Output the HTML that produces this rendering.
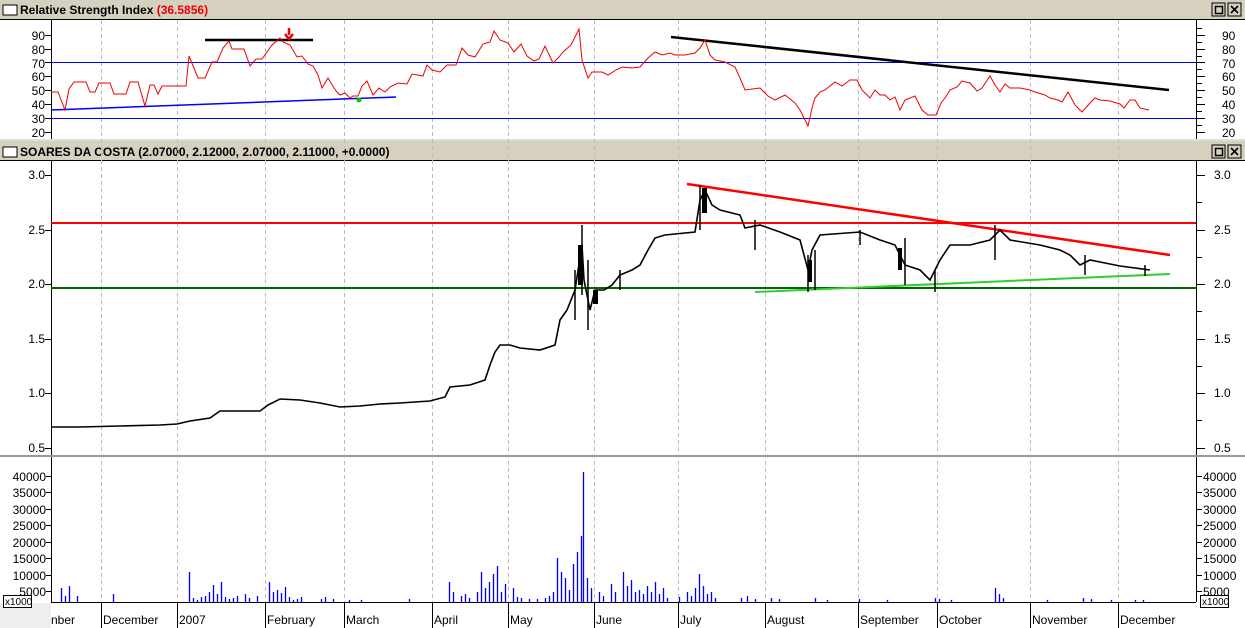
<!DOCTYPE html>
<html><head><meta charset="utf-8"><style>
html,body{margin:0;padding:0;background:#fff;width:1245px;height:628px;overflow:hidden;font-family:"Liberation Sans",sans-serif}
svg text{font-family:"Liberation Sans",sans-serif}
</style></head><body>
<svg width="1245" height="628" viewBox="0 0 1245 628" xmlns="http://www.w3.org/2000/svg">
<rect x="0" y="0" width="1245" height="19" fill="#d6d0c0"/>
<rect x="0" y="19" width="1245" height="1" fill="#000"/>
<rect x="3" y="5" width="14" height="10" fill="#fff" stroke="#000"/>
<text x="20" y="14" font-size="12" font-weight="bold" fill="#000">Relative Strength Index <tspan fill="#e00">(36.5856)</tspan></text>
<rect x="0" y="139" width="1245" height="2" fill="#ddd"/>
<rect x="0" y="141" width="1245" height="19" fill="#d6d0c0"/>
<rect x="0" y="160" width="1245" height="1" fill="#000"/>
<rect x="3" y="147" width="14" height="10" fill="#fff" stroke="#000"/>
<text x="20" y="156" font-size="12" font-weight="bold" fill="#000">SOARES DA COSTA (2.07000, 2.12000, 2.07000, 2.11000, +0.0000)</text>
<g fill="#d6d0c0" stroke="#000">
<rect x="1212" y="3" width="13" height="13"/><rect x="1228" y="3" width="13" height="13"/>
<rect x="1212" y="145" width="13" height="13"/><rect x="1228" y="145" width="13" height="13"/>
</g>
<rect x="1215.5" y="6.5" width="7" height="7" fill="none" stroke="#000" stroke-width="1.5"/>
<rect x="1215.5" y="148.5" width="7" height="7" fill="none" stroke="#000" stroke-width="1.5"/>
<path d="M1231 6l7 7M1238 6l-7 7M1231 148l7 7M1238 148l-7 7" stroke="#000" stroke-width="1.6"/>
<rect x="0" y="455" width="1245" height="2" fill="#999"/>
<g shape-rendering="crispEdges">
<path d="M51.5 20V139M51.5 161V455M51.5 457V602M1196.5 20V139M1196.5 161V455M1196.5 457V602M51 602.5H1196" stroke="#000" stroke-width="1"/>
</g>
<rect x="0" y="603" width="51" height="25" fill="#eee"/>
<g stroke="#bbb" stroke-dasharray="4,3" shape-rendering="crispEdges">
<path d="M101.5 20V602M177.5 20V602M265.5 20V602M344.5 20V602M432.5 20V602M508.5 20V602M594.5 20V602M678.5 20V602M765.5 20V602M858.5 20V602M937.5 20V602M1030.5 20V602M1118.5 20V602"/>
</g>
<g stroke="#000" shape-rendering="crispEdges"><path d="M101.5 602V628M177.5 602V628M265.5 602V628M344.5 602V628M432.5 602V628M508.5 602V628M594.5 602V628M678.5 602V628M765.5 602V628M858.5 602V628M937.5 602V628M1030.5 602V628M1118.5 602V628"/></g>
<g font-size="12" fill="#000">
<text x="51" y="624">nber</text><text x="103" y="624">December</text><text x="179" y="624">2007</text><text x="267" y="624">February</text><text x="346" y="624">March</text><text x="434" y="624">April</text><text x="510" y="624">May</text><text x="596" y="624">June</text><text x="680" y="624">July</text><text x="767" y="624">August</text><text x="860" y="624">September</text><text x="939" y="624">October</text><text x="1032" y="624">November</text><text x="1120" y="624">December</text>
</g>
<g font-size="12" fill="#000" text-anchor="end">
<text x="45" y="40">90</text><text x="45" y="54">80</text><text x="45" y="68">70</text><text x="45" y="81">60</text><text x="45" y="95">50</text><text x="45" y="109">40</text><text x="45" y="123">30</text><text x="45" y="137">20</text>
</g>
<g font-size="12" fill="#000">
<text x="1222" y="40">90</text><text x="1222" y="54">80</text><text x="1222" y="68">70</text><text x="1222" y="81">60</text><text x="1222" y="95">50</text><text x="1222" y="109">40</text><text x="1222" y="123">30</text><text x="1222" y="137">20</text>
</g>
<g stroke="#000" shape-rendering="crispEdges"><path d="M51 35.5h-6M51 49.5h-6M51 62.5h-6M51 76.5h-6M51 90.5h-6M51 104.5h-6M51 118.5h-6M51 132.5h-6M1196 35.5h9M1196 49.5h9M1196 62.5h9M1196 76.5h9M1196 90.5h9M1196 104.5h9M1196 118.5h9M1196 132.5h9M1196 28.5h6M1196 42.5h6M1196 56.5h6M1196 69.5h6M1196 83.5h6M1196 97.5h6M1196 111.5h6M1196 125.5h6"/></g>
<path d="M51 62.5H1196M51 118.5H1196" stroke="#00f" stroke-width="1" shape-rendering="crispEdges"/>
<path d="M51 110L396 97" stroke="#00f" stroke-width="1.5"/>
<path d="M205 40H313" stroke="#000" stroke-width="2.5"/>
<path d="M671 37L1169 90" stroke="#000" stroke-width="2.5"/>
<path d="M289 28v7M285 34l4 5 4-5" stroke="#e00" stroke-width="2.5" fill="none"/>
<circle cx="359" cy="100" r="2.5" fill="#0c0"/>
<polyline fill="none" stroke="#e00" stroke-width="1" points="51,92 58,92 65,110 69,89 74,82 86,82 90,92 95,92 99,83 110,83 114,94 126,94 130,82 138,82 145,106 150,85 154,85 158,94 162,86 186,86 189,56 198,78 205,78 212,62 217,62 223,48 229,41 232,49 244,49 250,66 256,59 262,59 272,45 280,38 283,42 290,45 297,57 302,56 308,64 313,66 318,75 322,88 328,78 334,88 337,92 340,95 345,93 350,98 353,96 358,96 362,86 367,81 373,95 379,88 385,92 390,87 398,83 407,84 412,74 423,76 427,65 432,70 440,72 447,65 456,65 462,48 468,55 475,57 483,44 490,42 494,31 500,40 508,43 514,52 521,44 527,56 534,61 539,59 545,46 553,63 559,57 563,52 571,45 579,29 582,60 588,78 592,72 602,72 608,75 616,70 622,67 632,68 640,67 648,58 655,52 662,55 670,53 675,55 685,55 695,53 700,48 705,40 710,55 715,60 725,62 735,67 740,78 745,90 760,88 768,96 775,100 785,95 795,103 800,110 808,126 813,104 815,98 820,92 825,90 835,82 842,86 850,80 857,80 862,90 870,98 875,90 880,95 885,95 890,100 895,97 900,110 905,100 915,96 922,110 928,115 936,115 941,103 945,98 950,90 957,87 962,81 970,83 977,91 982,88 990,76 995,85 1000,92 1005,84 1010,88 1020,88 1030,90 1035,92 1045,95 1050,98 1058,100 1062,102 1068,92 1075,105 1082,112 1090,103 1095,98 1100,100 1110,101 1120,104 1124,108 1130,100 1135,100 1140,108 1149,110"/>
<g font-size="12" fill="#000" text-anchor="end">
<text x="45" y="179">3.0</text><text x="45" y="234">2.5</text><text x="45" y="288">2.0</text><text x="45" y="343">1.5</text><text x="45" y="397">1.0</text><text x="45" y="452">0.5</text>
</g>
<g font-size="12" fill="#000">
<text x="1214" y="179">3.0</text><text x="1214" y="234">2.5</text><text x="1214" y="288">2.0</text><text x="1214" y="343">1.5</text><text x="1214" y="397">1.0</text><text x="1214" y="452">0.5</text>
</g>
<g stroke="#000" shape-rendering="crispEdges"><path d="M51 175.5h-6M51 230.5h-6M51 284.5h-6M51 339.5h-6M51 393.5h-6M51 448.5h-6M1196 175.5h9M1196 230.5h9M1196 284.5h9M1196 339.5h9M1196 393.5h9M1196 448.5h9M1196 202.5h6M1196 257.5h6M1196 311.5h6M1196 366.5h6M1196 420.5h6"/></g>
<path d="M51 223H1196" stroke="#f00" stroke-width="2"/>
<path d="M51 288H1196" stroke="#060" stroke-width="2"/>
<path d="M687 184L1170 255" stroke="#f00" stroke-width="2.5"/>
<path d="M755 292L1170 274" stroke="#3c3" stroke-width="2"/>
<polyline fill="none" stroke="#000" stroke-width="1.6" points="51,427 80,427 120,426 160,425 177,424 190,421 210,418 220,411 260,411 268,405 280,399 300,400 320,403 340,407 360,406 380,404 400,403 430,401 445,397 450,387 470,385 485,380 490,365 495,352 500,345 510,345 520,348 540,350 555,345 560,320 567,310 575,290 582,245 584,280 590,310 595,290 604,290 612,285 620,275 632,270 640,265 648,250 655,238 665,235 695,232 700,200 705,190 712,205 720,210 740,215 745,228 760,225 780,232 800,240 808,270 812,250 820,235 860,232 880,240 895,245 905,265 920,270 930,280 940,260 950,245 970,245 990,240 1000,230 1010,240 1040,245 1060,250 1070,255 1080,265 1090,260 1100,262 1120,266 1150,270"/>
<g stroke="#000" stroke-width="1.5">
<path d="M582 225V295M588 260V330M575 270V320M808 255V292M815 250V290M905 238V285M935 270V292M700 185V230M755 220V250M995 225V260M1085 255V275M1145 265V276M860 230V245M620 270V290"/>
</g>
<g fill="#000">
<rect x="578" y="245" width="5" height="40"/><rect x="702" y="188" width="5" height="25"/><rect x="808" y="260" width="4" height="22"/><rect x="898" y="248" width="4" height="22"/><rect x="593" y="290" width="5" height="14"/>
</g>
<g font-size="12" fill="#000" text-anchor="end">
<text x="46" y="481">40000</text><text x="46" y="497">35000</text><text x="46" y="514">30000</text><text x="46" y="530">25000</text><text x="46" y="547">20000</text><text x="46" y="563">15000</text><text x="46" y="580">10000</text><text x="46" y="596">5000</text>
</g>
<g font-size="12" fill="#000">
<text x="1203" y="481">40000</text><text x="1203" y="497">35000</text><text x="1203" y="514">30000</text><text x="1203" y="530">25000</text><text x="1203" y="547">20000</text><text x="1203" y="563">15000</text><text x="1203" y="580">10000</text><text x="1203" y="596">5000</text>
</g>
<g stroke="#000" shape-rendering="crispEdges"><path d="M51 476.5h-5M51 492.5h-5M51 509.5h-5M51 525.5h-5M51 542.5h-5M51 558.5h-5M51 575.5h-5M51 591.5h-5M1196 476.5h6M1196 492.5h6M1196 509.5h6M1196 525.5h6M1196 542.5h6M1196 558.5h6M1196 575.5h6M1196 591.5h6"/></g>
<rect x="3.5" y="595.5" width="28" height="12" fill="#fff" stroke="#000"/>
<text x="5" y="605" font-size="10" fill="#000">x1000</text>
<rect x="1200.5" y="595.5" width="28" height="12" fill="#fff" stroke="#000"/>
<text x="1202" y="605" font-size="10" fill="#000">x1000</text>
<g stroke="#0000ff" stroke-width="1.3">
<path d="M61.5 602v-14M65.5 602v-6M69.5 602v-16M77.5 602v-6M113.5 602v-8M189.5 602v-30M193.5 602v-4M197.5 602v-2M201.5 602v-5M205.5 602v-6M209.5 602v-10M213.5 602v-17M217.5 602v-8M221.5 602v-20M225.5 602v-5M229.5 602v-3M233.5 602v-4M237.5 602v-6M245.5 602v-8M249.5 602v-4M257.5 602v-6M269.5 602v-20M273.5 602v-10M277.5 602v-12M281.5 602v-9M285.5 602v-15M289.5 602v-5M293.5 602v-2M297.5 602v-3M301.5 602v-5M321.5 602v-3M325.5 602v-5M333.5 602v-3M349.5 602v-2M361.5 602v-2M409.5 602v-3M449.5 602v-20M453.5 602v-10M461.5 602v-6M465.5 602v-8M469.5 602v-4M477.5 602v-10M481.5 602v-30M485.5 602v-14M489.5 602v-20M493.5 602v-28M497.5 602v-36M501.5 602v-10M505.5 602v-18M513.5 602v-14M517.5 602v-5M521.5 602v-4M529.5 602v-3M537.5 602v-3M545.5 602v-4M549.5 602v-6M553.5 602v-10M557.5 602v-44M561.5 602v-30M565.5 602v-24M569.5 602v-12M573.5 602v-38M577.5 602v-50M581.5 602v-66M583.5 602v-130M587.5 602v-24M591.5 602v-14M599.5 602v-10M603.5 602v-6M611.5 602v-18M615.5 602v-10M623.5 602v-30M627.5 602v-16M631.5 602v-22M635.5 602v-10M639.5 602v-12M643.5 602v-8M647.5 602v-16M651.5 602v-10M655.5 602v-20M659.5 602v-8M663.5 602v-14M667.5 602v-4M679.5 602v-5M687.5 602v-10M691.5 602v-6M695.5 602v-14M699.5 602v-28M703.5 602v-16M707.5 602v-8M711.5 602v-10M715.5 602v-4M741.5 602v-4M747.5 602v-6M755.5 602v-3M771.5 602v-4M779.5 602v-3M815.5 602v-4M827.5 602v-2M859.5 602v-3M887.5 602v-2M935.5 602v-4M939.5 602v-3M951.5 602v-2M995.5 602v-14M999.5 602v-8M1003.5 602v-4M1047.5 602v-2M1083.5 602v-4M1091.5 602v-3M1111.5 602v-2M1135.5 602v-2M1143.5 602v-2"/>
</g>
</svg>
</body></html>
